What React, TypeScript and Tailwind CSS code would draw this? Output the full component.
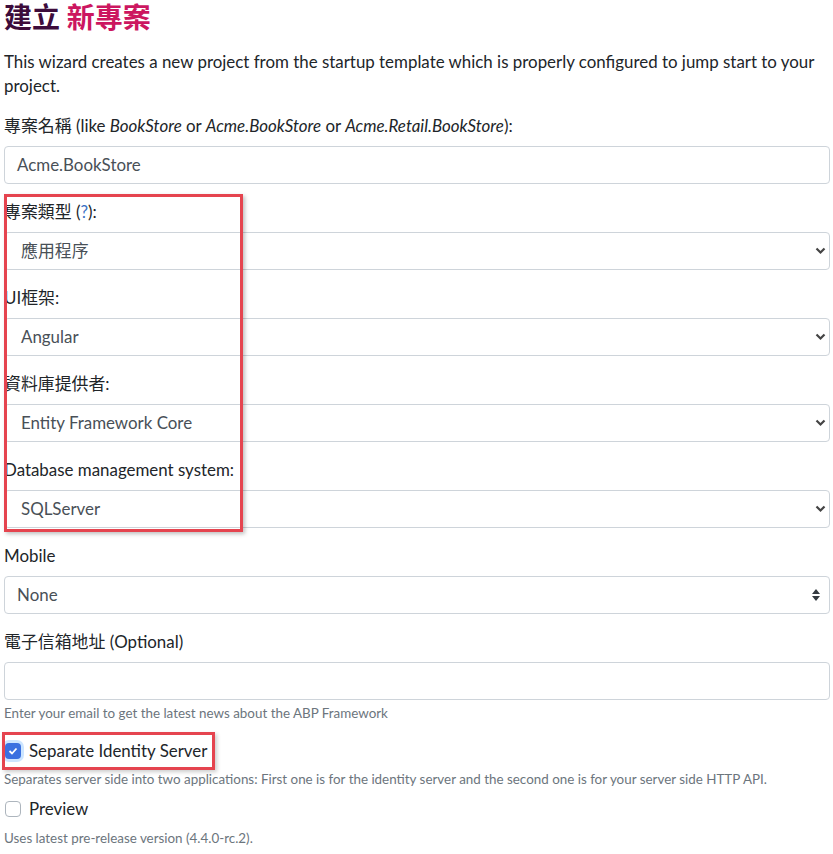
import { FC } from "react";

const Chevron: FC = () => (
	<svg width="11" height="8" viewBox="0 0 11 8" className="text-[#444]">
		<path d="M1.5 1.5 L5.5 5.5 L9.5 1.5" fill="none" stroke="currentColor" strokeWidth="2.2" />
	</svg>
);

const UpDown: FC = () => (
	<svg width="8" height="12" viewBox="0 0 8 12" className="text-[#343a40]">
		<path d="M4 0 L8 5 L0 5 Z M4 12 L0 7 L8 7 Z" fill="currentColor" />
	</svg>
);

const SelectBox: FC<{ value: string; mobile?: boolean }> = ({ value, mobile }) => (
	<div
		className={`h-[38px] border border-[#ced4da] rounded-[4px] bg-white flex items-center justify-between text-[#495057] ${
			mobile ? "pl-[12px] pr-[9px]" : "pl-[16px] pr-[3px]"
		}`}
	>
		<span>{value}</span>
		{mobile ? <UpDown /> : <Chevron />}
	</div>
);

const Field: FC<{ label: React.ReactNode; children: React.ReactNode }> = ({ label, children }) => (
	<div className="mb-[16px]">
		<div className="mb-[8px]">{label}</div>
		{children}
	</div>
);

export default function App() {
	return (
		<div
			className="bg-white min-h-screen pl-[4px] pr-[3px] text-[16.9px] leading-[24px] text-[#212529]"
			style={{ fontFamily: '"Lato", "Noto Sans CJK TC", sans-serif' }}
		>
			<h2 className="text-[28px] leading-[34px] font-bold mb-[16px]">
				<span className="text-[#3d0c3b]">建立</span> <span className="text-[#cc1660]">新專案</span>
			</h2>
			<p className="mb-[16px]">
				This wizard creates a new project from the startup template which is properly configured to jump start to your
				project.
			</p>

			<Field
				label={
					<>
						專案名稱 (like <i>BookStore</i> or <i>Acme.BookStore</i> or <i>Acme.Retail.BookStore</i>):
					</>
				}
			>
				<div className="h-[38px] border border-[#ced4da] rounded-[4px] flex items-center px-[12px] text-[#495057]">
					Acme.BookStore
				</div>
			</Field>

			<div className="relative">
				<Field
					label={
						<>
							專案類型 (<span className="text-[#3b72c4]">?</span>):
						</>
					}
				>
					<SelectBox value="應用程序" />
				</Field>
				<Field label="UI框架:">
					<SelectBox value="Angular" />
				</Field>
				<Field label="資料庫提供者:">
					<SelectBox value="Entity Framework Core" />
				</Field>
				<Field label="Database management system:">
					<SelectBox value="SQLServer" />
				</Field>
				<div className="absolute left-0 top-[-6px] w-[239px] h-[338px] border-[3px] border-[#e5444f] shadow-[2px_2px_4px_rgba(0,0,0,0.25)] pointer-events-none" />
			</div>

			<Field label="Mobile">
				<SelectBox value="None" mobile />
			</Field>

			<div className="mb-[16px]">
				<div className="mb-[8px]">電子信箱地址 (Optional)</div>
				<div className="h-[38px] border border-[#ced4da] rounded-[4px]" />
				<div className="mt-[4px] text-[13.4px] leading-[19px] text-[#6c757d]">
					Enter your email to get the latest news about the ABP Framework
				</div>
			</div>

			<div className="relative">
				<label className="flex items-center gap-[8px] pl-[1px]">
					<span className="w-[16px] h-[16px] rounded-[4px] bg-[#3a70e0] flex items-center justify-center shadow-[0_0_0_3px_rgba(0,123,255,0.2)]">
						<svg width="10" height="8" viewBox="0 0 10 8">
							<path d="M1.5 4 L4 6.5 L8.5 1.5" fill="none" stroke="white" strokeWidth="1.8" />
						</svg>
					</span>
					<span>Separate Identity Server</span>
				</label>
				<div className="absolute left-[-2px] top-[-7px] w-[213px] h-[38px] border-[3px] border-[#e5444f] shadow-[2px_2px_4px_rgba(0,0,0,0.2)] pointer-events-none" />
			</div>
			<div className="mt-[7px] text-[13.4px] leading-[19px] text-[#6c757d]">
				Separates server side into two applications: First one is for the identity server and the second one is for your
				server side HTTP API.
			</div>

			<label className="mt-[8px] flex items-center gap-[8px] pl-[1px]">
				<span className="w-[16px] h-[16px] rounded-[4px] border border-[#adb5bd] bg-white" />
				<span>Preview</span>
			</label>
			<div className="mt-[8px] text-[13.4px] leading-[19px] text-[#6c757d]">Uses latest pre-release version (4.4.0-rc.2).</div>
		</div>
	);
}
